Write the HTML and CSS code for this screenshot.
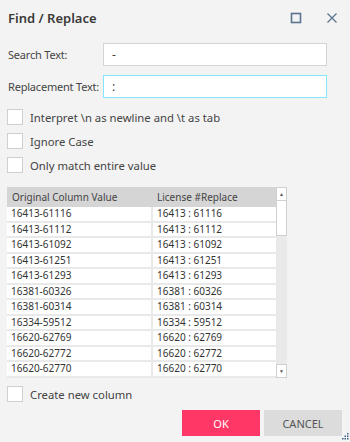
FILE: index.html
```html
<!DOCTYPE html>
<html lang="en">
<head>
  <link rel="stylesheet" href="styles.css">
  <title>Find / Replace</title>
</head>
<body>
<div class="dialog">
  <div class="title-bar">
    <p class="title">Find / Replace</p>
    <div class="title-icons">
      <svg class="icon" width="12" height="12" viewBox="0 0 12 12"><rect x="1.5" y="1.5" width="9" height="9" fill="none" stroke="#5a7490" stroke-width="1.6"/></svg>
      <svg class="icon" width="12" height="12" viewBox="0 0 12 12"><path d="M1.5 1.5 L10.5 10.5 M10.5 1.5 L1.5 10.5" stroke="#5a7490" stroke-width="1.3" fill="none"/></svg>
    </div>
  </div>

  <div class="field">
    <label class="field-label">Search Text:</label>
    <input class="text-input" type="text" value="-">
  </div>
  <div class="field">
    <label class="field-label">Replacement Text:</label>
    <input class="text-input text-input-focus" type="text" value=":">
  </div>

  <div class="checks">
    <div class="check"><span class="box"></span>Interpret \n as newline and \t as tab</div>
    <div class="check"><span class="box"></span>Ignore Case</div>
    <div class="check"><span class="box"></span>Only match entire value</div>
  </div>

  <div class="grid-wrap">
    <div class="grid">
      <div class="grid-head">
        <div class="head-cell col1">Original Column Value</div>
        <div class="head-cell col2">License #Replace</div>
      </div>
      <div class="grid-body">
        <div class="cell">16413-61116</div><div class="cell">16413 : 61116</div>
        <div class="cell">16413-61112</div><div class="cell">16413 : 61112</div>
        <div class="cell">16413-61092</div><div class="cell">16413 : 61092</div>
        <div class="cell">16413-61251</div><div class="cell">16413 : 61251</div>
        <div class="cell">16413-61293</div><div class="cell">16413 : 61293</div>
        <div class="cell">16381-60326</div><div class="cell">16381 : 60326</div>
        <div class="cell">16381-60314</div><div class="cell">16381 : 60314</div>
        <div class="cell">16334-59512</div><div class="cell">16334 : 59512</div>
        <div class="cell">16620-62769</div><div class="cell">16620 : 62769</div>
        <div class="cell">16620-62772</div><div class="cell">16620 : 62772</div>
        <div class="cell">16620-62770</div><div class="cell">16620 : 62770</div>
      </div>
    </div>
    <div class="scrollbar">
      <div class="scroll-btn">&#9650;</div>
      <div class="scroll-thumb"></div>
      <div class="scroll-track"></div>
      <div class="scroll-btn">&#9660;</div>
    </div>
  </div>

  <div class="check check-new"><span class="box"></span>Create new column</div>

  <div class="buttons">
    <button class="btn btn-ok">OK</button>
    <button class="btn btn-cancel">CANCEL</button>
  </div>

  <svg class="grip" width="9" height="9" viewBox="0 0 9 9">
    <g fill="#3d6187">
      <rect x="7" y="1" width="1.5" height="1.5"/>
      <rect x="4.5" y="3.5" width="1.5" height="1.5"/><rect x="7" y="3.5" width="1.5" height="1.5"/>
      <rect x="2" y="6" width="1.5" height="1.5"/><rect x="4.5" y="6" width="1.5" height="1.5"/><rect x="7" y="6" width="1.5" height="1.5"/>
    </g>
  </svg>
</div>
</body>
</html>
```

FILE: styles.css
```css
body {
  margin: 0;
  background-color: #f3f3f3;
  color: #333;
  font-family: "Noto Sans", "Open Sans", sans-serif;
}

.dialog {
  position: relative;
  width: 350px;
  height: 442px;
  padding: 0 7px;
  box-sizing: border-box;
  overflow: hidden;
}

.title-bar {
  display: flex;
  align-items: center;
  justify-content: space-between;
  height: 36px;
}
.title {
  margin: 0;
  padding-left: 1px;
  font-size: 13px;
  font-weight: 600;
  color: #3a3a3a;
}
.title-icons {
  display: flex;
  gap: 24px;
  padding-right: 5px;
}

.field {
  display: flex;
  align-items: center;
  margin-top: 7px;
}
.field + .field {
  margin-top: 9px;
}
.field-label {
  flex-shrink: 0;
  width: 95px;
  padding-left: 1px;
  white-space: nowrap;
  font-size: 11px;
  letter-spacing: -0.2px;
  color: #444;
}
.text-input {
  width: 224px;
  height: 23px;
  box-sizing: border-box;
  border: 1px solid #d4d4d4;
  background: white;
  padding: 0 8px;
  font-family: "Noto Sans", sans-serif;
  font-size: 12px;
  color: #444;
  outline: none;
}
.text-input-focus {
  border-color: #86e6ff;
}

.checks {
  display: flex;
  flex-direction: column;
  gap: 8px;
  margin-top: 11px;
}
.check {
  display: flex;
  align-items: center;
  gap: 7px;
  height: 16px;
  white-space: nowrap;
  font-size: 11.3px;
  color: #444;
}
.box {
  flex-shrink: 0;
  width: 14px;
  height: 14px;
  border: 1px solid #cfcfcf;
  background: white;
}

.grid-wrap {
  display: flex;
  margin-top: 14px;
  width: 280px;
  height: 191px;
}
.grid {
  width: 269px;
  background: #e9e9e9;
}
.grid-head {
  display: flex;
  height: 20px;
  background: #d5d5d5;
}
.head-cell {
  white-space: nowrap;
  font-size: 10px;
  line-height: 20px;
  color: #444;
  padding-left: 5px;
}
.col1 {
  width: 140px;
}
.grid-body {
  display: grid;
  grid-template-columns: 144px 123px;
  grid-auto-rows: 13.5px;
  gap: 2px;
}
.cell {
  background: white;
  font-size: 10px;
  line-height: 13.5px;
  padding-left: 4px;
  color: #333;
}

.scrollbar {
  display: flex;
  flex-direction: column;
  width: 11px;
  background: #e9e9e9;
}
.scroll-btn {
  height: 14px;
  box-sizing: border-box;
  border: 1px solid #d0d0d0;
  background: white;
  font-size: 5px;
  line-height: 12px;
  text-align: center;
  color: #555;
}
.scroll-thumb {
  height: 35px;
  box-sizing: border-box;
  border: 1px solid #d0d0d0;
  border-top: none;
  background: white;
}
.scroll-track {
  flex: 1;
}

.check-new {
  margin-top: 8px;
}

.buttons {
  display: flex;
  justify-content: flex-end;
  gap: 4px;
  margin-top: 8px;
  padding-right: 1px;
}
.btn {
  width: 78px;
  height: 26px;
  border: none;
  font-family: "Noto Sans", sans-serif;
  font-size: 11px;
}
.btn-ok {
  background-color: #ff3766;
  color: white;
}
.btn-cancel {
  background-color: #dcdcdc;
  color: #555;
}

.grip {
  position: absolute;
  right: 1px;
  bottom: 1px;
}
```
